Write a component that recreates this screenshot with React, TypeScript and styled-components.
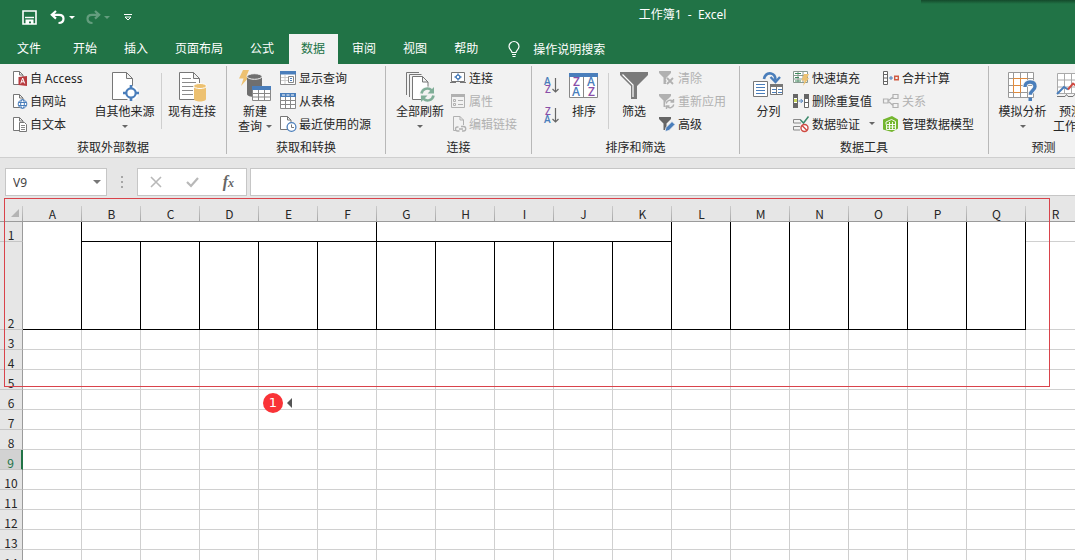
import React from 'react';
import styled, { createGlobalStyle, css } from 'styled-components';

const GREEN = '#217346';
const GREY = '#777777';
const BLUE = '#4a7ebb';
const PALE = '#b1b1b1';

const GlobalStyle = createGlobalStyle`
  * { box-sizing: border-box; }
  body {
    margin: 0;
    background: #e6e6e6;
    font-family: 'Noto Sans', 'Noto Sans CJK SC', sans-serif;
    font-size: 12px;
    color: #262626;
  }
  button, input { font: inherit; color: inherit; }
`;

const Window = styled.div`
  display: flex;
  flex-direction: column;
  height: 100vh;
  overflow: hidden;
`;

const PlainButton = styled.button`
  display: flex;
  align-items: center;
  flex: none;
  padding: 0;
  border: 0;
  background: none;
  white-space: nowrap;
  cursor: pointer;
`;

const Svg = styled.svg`
  display: block;
  flex: none;
  overflow: visible;
`;

/* ---------- title bar and tabs ---------- */

const Banner = styled.header`
  position: relative;
  flex: none;
  background: ${GREEN};
  color: #ffffff;
`;

const TopShade = styled.div`
  position: absolute;
  top: 0;
  right: 0;
  width: 154px;
  height: 4px;
  background: linear-gradient(#14492b, ${GREEN});
`;

const TitleBar = styled.div`
  display: flex;
  align-items: center;
  height: 34px;
`;

const QuickAccess = styled.div`
  display: flex;
  align-items: center;
  width: 290px;
  padding-left: 22px;
`;

const QuickButton = styled(PlainButton)<{ $gap: number; $dim?: boolean }>`
  margin-right: ${(p) => p.$gap}px;
  opacity: ${(p) => (p.$dim ? 0.3 : 1)};
`;

const Title = styled.h1`
  flex: 1;
  margin: 0;
  font-size: 12px;
  font-weight: 400;
  line-height: 30px;
  height: 34px;
  text-align: center;
  white-space: pre;
`;

const TabStrip = styled.nav`
  display: flex;
  gap: 2px;
  height: 30px;
  padding-left: 5px;
`;

const Tab = styled(PlainButton)<{ $active?: boolean; $wide?: boolean }>`
  height: 30px;
  padding: 0 13px 2px 12px;
  margin-right: ${(p) => (p.$wide ? 5 : 0)}px;
  ${(p) =>
    p.$active &&
    css`
      background: #f2f2f2;
      color: ${GREEN};
    `}
`;

const TellMe = styled(PlainButton)`
  gap: 13px;
  padding-left: 15px;
`;

/* ---------- ribbon ---------- */

const Ribbon = styled.section`
  display: flex;
  flex: none;
  height: 94px;
  padding-top: 2px;
  overflow-x: auto;
  overflow-y: hidden;
  scrollbar-width: none;
  background: #f2f2f2;
  border-bottom: 1px solid #cfcfcf;
`;

const Group = styled.div<{ $left: number; $right?: number }>`
  flex: none;
  padding: 0 ${(p) => p.$right ?? 0}px 0 ${(p) => p.$left}px;
  border-right: 1px solid transparent;
  border-image: linear-gradient(#b8b8b8 87px, transparent 87px) 1;
`;

const GroupBody = styled.div`
  display: flex;
  height: 72px;
`;

const GroupLabel = styled.div<{ $left: number; $right: number }>`
  margin: 0 -${(p) => p.$right}px 0 -${(p) => p.$left}px;
  line-height: 20px;
  text-align: center;
  white-space: nowrap;
`;

const Divider = styled.div`
  width: 1px;
  height: 56px;
  margin-top: 7px;
  background: #cfcfcf;
`;

const Column = styled.div<{ $width: number }>`
  width: ${(p) => p.$width}px;
`;

const SmallButton = styled(PlainButton)`
  gap: 3px;
  height: 23px;
  &:disabled { color: ${PALE}; cursor: default; }
`;

const SortColumn = styled.div`
  display: flex;
  flex-direction: column;
  gap: 13px;
  width: 18px;
  padding: 11px 0 0 2px;
`;

const BigButton = styled(PlainButton)<{ $width: number }>`
  flex-direction: column;
  width: ${(p) => p.$width}px;
  height: 72px;
  padding-top: 6px;
`;

const BigLabel = styled.span`
  margin-top: 2px;
  line-height: 15px;
  text-align: center;
`;

const CaretRow = styled.span`
  display: flex;
  align-items: center;
  justify-content: center;
  gap: 4px;
`;

const LoneCaret = styled.span`
  margin-top: 6px;
`;

/* ---------- formula bar ---------- */

const FormulaBar = styled.section`
  display: flex;
  flex: none;
  height: 38px;
  padding: 10px 0 0 5px;
`;

const NameBox = styled.div`
  display: flex;
  align-items: center;
  width: 102px;
  height: 28px;
  padding-right: 5px;
  background: #ffffff;
  border: 1px solid #c6c6c6;
`;

const NameInput = styled.input`
  flex: 1;
  min-width: 0;
  padding: 0 0 0 7px;
  border: 0;
  outline: 0;
  background: none;
  color: #444444;
`;

const Grip = styled.div`
  display: flex;
  justify-content: center;
  align-items: center;
  width: 30px;
`;

const FormulaActions = styled.div`
  display: flex;
  align-items: center;
  justify-content: space-between;
  width: 110px;
  height: 28px;
  padding: 0 12px;
  background: #ffffff;
  border: 1px solid #c6c6c6;
`;

const FxMark = styled.span`
  font-family: 'Liberation Serif', serif;
  font-size: 16px;
  font-style: italic;
  font-weight: 700;
  line-height: 20px;
  color: #666666;
  small { font-size: 12px; }
`;

const FormulaInput = styled.input`
  flex: 1;
  min-width: 0;
  height: 28px;
  margin-left: 3px;
  padding: 0 8px;
  border: 1px solid #c6c6c6;
  border-right: 0;
  outline: 0;
  background: #ffffff;
`;

/* ---------- sheet ---------- */

const Sheet = styled.main`
  position: relative;
  flex: 1;
  min-height: 0;
  overflow: auto;
  scrollbar-width: none;
  background: #e6e6e6;
`;

const Grid = styled.table`
  width: 1557px;
  table-layout: fixed;
  border-collapse: separate;
  border-spacing: 0;
  background: #ffffff;
  font-family: 'Noto Sans CJK SC', sans-serif;
`;

const HeadCol = styled.col`
  width: 23px;
`;

const DataCol = styled.col`
  width: 59px;
`;

const ColumnHead = styled.th`
  height: 26px;
  padding: 0;
  border-bottom: 1px solid #9b9b9b;
  background: linear-gradient(#cccccc, #a6a6a6) right bottom / 1px 15px no-repeat #e6e6e6;
  font-weight: 400;
  line-height: 15px;
  vertical-align: bottom;
  text-align: center;
`;

const Corner = styled.span`
  display: block;
  width: 0;
  margin: 0 0 4px 11px;
  border-left: 8px solid transparent;
  border-bottom: 8px solid #b4b4b4;
`;

const RowHead = styled.th<{ $selected?: boolean }>`
  padding: 0;
  border-right: 1px solid #9b9b9b;
  border-bottom: 1px solid #c6c6c6;
  background: #e6e6e6;
  font-weight: 400;
  line-height: 13px;
  vertical-align: bottom;
  text-align: center;
  ${(p) =>
    p.$selected &&
    css`
      background: #d2d2d2;
      color: ${GREEN};
      border-right: 2px solid ${GREEN};
    `}
`;

const Row = styled.tr<{ $height: number }>`
  height: ${(p) => p.$height}px;
`;

const Cell = styled.td<{ $boxed?: boolean }>`
  padding: 0;
  border-right: 1px solid ${(p) => (p.$boxed ? '#000000' : '#d0d0d0')};
  border-bottom: 1px solid ${(p) => (p.$boxed ? '#000000' : '#d0d0d0')};
`;

const Outline = styled.div`
  position: absolute;
  top: 2px;
  left: 4px;
  width: 1046px;
  height: 189px;
  border: 1px solid #d9434b;
  pointer-events: none;
`;

const Marker = styled.div`
  position: absolute;
  top: 197px;
  left: 263px;
  display: flex;
  align-items: center;
  gap: 4px;
`;

const MarkerDot = styled.span`
  width: 20px;
  height: 20px;
  border-radius: 50%;
  background: #f93337;
  color: #ffffff;
  font-family: 'DejaVu Sans', sans-serif;
  font-size: 13px;
  line-height: 20px;
  text-align: center;
`;

/* ---------- icons ---------- */

type IconProps = { w?: number; h?: number; children: React.ReactNode };
const Icon = ({ w = 16, h = 16, children }: IconProps) => (
  <Svg width={w} height={h} viewBox={`0 0 ${w} ${h}`} fill="none" aria-hidden="true">
    {children}
  </Svg>
);

const Caret = ({ color = '#666666' }: { color?: string }) => (
  <Icon w={6} h={3}><path d="M0 0h6L3 3z" fill={color} /></Icon>
);

const SmallPage = ({ color = GREY }: { color?: string }) => (
  <path d="M2.5 1.5h6l3.500 3.500v9.500h-9.500zM8.500 1.500v3.500h3.500" fill="#fff" stroke={color} />
);

const SaveIcon = () => (
  <Icon w={15} h={15}>
    <path d="M1 1h13v13H1z" stroke="#fff" strokeWidth="1.600" />
    <path d="M3 7.500h9" stroke="#fff" strokeWidth="1.400" />
    <path d="M3.500 9.500h8V14H9v-2.500H7V14H3.500z" fill="#fff" />
  </Icon>
);
const UndoIcon = () => (
  <Icon w={15} h={14}>
    <path d="M6 1L1.800 4.800 6 8.600M2 4.800h7c3 0 4.500 1.800 4.500 4 0 2.400-1.800 4.200-5 4.200" stroke="#fff" strokeWidth="2.200" />
  </Icon>
);
const RedoIcon = () => (
  <Icon w={15} h={14}>
    <path d="M9 1l4.200 3.800L9 8.600M13 4.800H6c-3 0-4.500 1.800-4.500 4C1.500 11.200 3.300 13 6.500 13" stroke="#fff" strokeWidth="2.200" />
  </Icon>
);
const CustomizeIcon = () => (
  <Icon w={8} h={7}><path d="M0 .5h8M1 3l3 3 3-3z" stroke="#fff" /></Icon>
);
const BulbIcon = () => (
  <Icon w={12} h={16}>
    <path d="M4 11.500C4 9.500 1 8.500 1 5.500a5 5 0 0 1 10 0c0 3-3 4-3 6zM4 13.500h4M4.500 15.500h3" stroke="#fff" strokeWidth="1.200" />
  </Icon>
);

const AccessIcon = () => (
  <Icon>
    <SmallPage />
    <path d="M7.500 7l8.500-1v10l-8.500-1z" fill="#b83b3f" />
    <path d="M9.700 13.500l2-5.500 2 5.500M10.400 11.800h2.600" stroke="#fff" />
  </Icon>
);
const WebIcon = () => (
  <Icon>
    <SmallPage />
    <circle cx="11.500" cy="11" r="4.300" fill="#fff" stroke={BLUE} />
    <ellipse cx="11.500" cy="11" rx="1.900" ry="4.300" stroke={BLUE} />
    <path d="M7.300 9.500h8.400M7.300 12.500h8.400" stroke={BLUE} />
  </Icon>
);
const TextFileIcon = () => (
  <Icon>
    <SmallPage />
    <path d="M8.500 6.500h5l2 2v7h-7z" fill="#fff" stroke={GREY} />
    <path d="M10 9.500h4M10 11.500h4M10 13.500h4" stroke="#888" />
  </Icon>
);
const OtherSourceIcon = () => (
  <Icon w={28} h={30}>
    <path d="M1.500.5h14l6 6v21h-20zM15.500.5v6h6" fill="#fff" stroke={GREY} />
    <circle cx="20" cy="21" r="7.500" fill="#fff" />
    <circle cx="20" cy="21" r="4.700" stroke={BLUE} strokeWidth="2.200" fill="#fff" />
    <path d="M20 13v4M20 25v4M12 21h4M24 21h4" stroke={BLUE} strokeWidth="2.600" />
  </Icon>
);
const ExistingIcon = () => (
  <Icon w={28} h={30}>
    <path d="M1.500.5h14l6 6v21h-20zM15.500.5v6h6" fill="#fff" stroke={GREY} />
    <path d="M4 6.500h9M4 10.500h14M4 14.500h12M4 18.500h11M4 22.500h11" stroke="#8a8a8a" />
    <path d="M16 14v13c0 1.500 2.600 2.500 6 2.500s6-1 6-2.500V14z" fill="#edc171" />
    <ellipse cx="22" cy="14" rx="6.500" ry="2.500" fill="#edc171" stroke="#fff" />
  </Icon>
);
const NewQueryIcon = () => (
  <Icon w={32} h={30}>
    <path d="M4-2h6L7.500 4H11L2 14l2.500-7.500H0z" fill="#edc171" />
    <path d="M8 5v17c0 2 3.500 3 7.500 3s7.500-1 7.500-3V5z" fill="#6f6f6f" />
    <ellipse cx="15.500" cy="4.500" rx="7.500" ry="2.800" fill="#6f6f6f" stroke="#f2f2f2" />
    <path d="M13.500 14.500h18v14h-18z" fill="#fff" stroke="#888" />
    <path d="M13 14h19v4H13z" fill={BLUE} />
    <path d="M19.500 18v10.500M25.500 18v10.500M14 21.500h18M14 25h18" stroke="#888" />
  </Icon>
);
const ShowQueryIcon = () => (
  <Icon>
    <path d="M.5 1.500h15v13H.5z" fill="#fff" stroke="#888" />
    <path d="M0 1h16v3.500H0z" fill={BLUE} />
    <path d="M1 7.500h7.500M1 10.500h7.500M5 5v9" stroke="#ccc" />
    <path d="M8.500 6.500h5v6h-5z" fill="#fff" stroke="#888" /><path d="M10 8.500h2M10 10.500h2" stroke={BLUE} />
  </Icon>
);
const TableIcon = () => (
  <Icon>
    <path d="M.5.5h15v15H.5z" fill="#fff" stroke="#888" />
    <path d="M0 0h16v4H0z" fill={BLUE} />
    <path d="M2 2h3M6.500 2h3M11 2h3" stroke="#fff" />
    <path d="M5.500 4v12M10.500 4v12M0 7.500h16M0 11.500h16" stroke="#888" />
  </Icon>
);
const RecentIcon = () => (
  <Icon>
    <path d="M.5.5h7l3.500 3.500v9.500H.5zM7.500.5v3.500H11" fill="#fff" stroke={GREY} />
    <circle cx="11.500" cy="11" r="4.400" fill="#fff" stroke={BLUE} strokeWidth="1.300" />
    <path d="M11.500 8.500V11.500h2.500" stroke={GREY} />
  </Icon>
);
const RefreshAllIcon = () => (
  <Icon w={30} h={30}>
    <path d="M1.500 23V.5h12.500M4.500 25V2.500h12" stroke={GREY} />
    <path d="M7.500 4.500h10l5.500 5.500v17.500H7.500zM17.500 4.500V10H23" fill="#fff" stroke={GREY} />
    <circle cx="22.500" cy="22.500" r="8" fill="#f2f2f2" />
    <path d="M16.500 21.500a6 6 0 0 1 10-3.300M28.500 23.500a6 6 0 0 1-10 3.300" stroke="#80ae98" strokeWidth="2.600" />
    <path d="M29 15v6.500H22.500zM16 30v-6.500H22.500z" fill="#80ae98" />
  </Icon>
);
const ConnectionsIcon = () => (
  <Icon>
    <path d="M1.500 11.500v-9h13v9z" fill="#fff" stroke={GREY} />
    <path d="M0 12.500h6M10 12.500h6" stroke={GREY} />
    <circle cx="8" cy="7" r="1.900" stroke={BLUE} strokeWidth="1.400" />
    <path d="M8 3.500v2M8 8.500v2M4.500 7h2M9.500 7h2" stroke={BLUE} strokeWidth="1.400" />
  </Icon>
);
const PropertiesIcon = () => (
  <Icon>
    <path d="M1.500 1.500h13v13h-13z" stroke={PALE} /><path d="M1 1h14v3H1z" fill={PALE} />
    <path d="M3.500 6.500h2v2h-2zM3.500 10.500h2v2h-2zM8 7.500h5M8 11.500h5" stroke={PALE} />
  </Icon>
);
const EditLinksIcon = () => (
  <Icon>
    <path d="M6 14.500H3.500V.5h6.500l3.500 3.500v5M10 .5V4h3.500" stroke={PALE} />
    <path d="M8.500 11h-1a2 2 0 0 0 0 4h2M11 10.500h2.500a2 2 0 0 1 0 4.500H12M9 13h4" stroke={PALE} strokeWidth="1.300" />
  </Icon>
);

const Letter = ({ x, y, size, color, children }: { x: number; y: number; size: number; color: string; children: string }) => (
  <text x={x} y={y} fontFamily="Open Sans, sans-serif" fontSize={size} fontWeight="600" fill={color}>{children}</text>
);
const PURPLE = '#8a4fa8';
const SortIcon = ({ top, bottom }: { top: string; bottom: string }) => (
  <Icon w={15} h={17}>
    <Letter x={top === 'A' ? 0 : 1} y={8} size={10} color={top === 'A' ? BLUE : PURPLE}>{top}</Letter>
    <Letter x={bottom === 'A' ? 0 : 1} y={16} size={10} color={bottom === 'A' ? BLUE : PURPLE}>{bottom}</Letter>
    <path d="M11.500 1v14M8.500 12l3 3 3-3" stroke="#666" strokeWidth="1.200" />
  </Icon>
);
const SortBigIcon = () => (
  <Icon w={30} h={30}>
    <path d="M.5 1.500h28v24H.5zM14.500 5v20" fill="#fff" stroke="#888" />
    <path d="M0 1h29v4H0z" fill={BLUE} />
    <Letter x={4} y={14} size={12} color={PURPLE}>Z</Letter>
    <Letter x={3} y={24} size={12} color={BLUE}>A</Letter>
    <Letter x={18} y={14} size={12} color={BLUE}>A</Letter>
    <Letter x={19} y={24} size={12} color={PURPLE}>Z</Letter>
  </Icon>
);
const FilterBigIcon = () => (
  <Icon w={28} h={30}>
    <path d="M0 0h28v3L17 14v13h-6V14L0 3z" fill="#7a7a7a" />
    <path d="M2.500 2.500l10.500 10.500v12" stroke="#fff" strokeWidth="1.200" />
  </Icon>
);
const Funnel = ({ color }: { color: string }) => <path d="M0 1h12v2L7.500 7.500V14h-3V7.500L0 3z" fill={color} />;
const ClearIcon = () => (
  <Icon><Funnel color={PALE} /><path d="M8 8l6 6M14 8l-6 6" stroke="#f2f2f2" strokeWidth="4" /><path d="M8 8l6 6M14 8l-6 6" stroke={PALE} strokeWidth="1.800" /></Icon>
);
const ReapplyIcon = () => (
  <Icon>
    <Funnel color={PALE} /><circle cx="11" cy="11" r="5" fill="#f2f2f2" />
    <path d="M7.200 10.500a4 4 0 0 1 6.800-2M14.800 11.500a4 4 0 0 1-6.800 2M14.500 6v3h-3M7.500 16v-3h3" stroke={PALE} strokeWidth="1.400" />
  </Icon>
);
const AdvancedIcon = () => (
  <Icon>
    <Funnel color="#666" />
    <path d="M6 15.500l1-4 6-6 3 3-6 6z" fill={BLUE} stroke="#f2f2f2" strokeWidth=".8" />
  </Icon>
);
const SplitIcon = () => (
  <Icon w={31} h={30}>
    <path d="M11 7c1-4.500 4-6 7-5.500 3 .6 4.500 3 4.500 6.500" stroke={BLUE} strokeWidth="2.600" />
    <path d="M17.500 5l5 5 4.500-5" stroke={BLUE} strokeWidth="2.400" />
    <path d="M.5 9.500h14v15H.5z" fill="#fff" stroke={GREY} />
    <path d="M3 12.500h9M3 15.500h9M3 18.500h9M3 21.500h9" stroke={BLUE} />
    <path d="M17.500 12.500h12v10h-12z" fill="#fff" stroke={GREY} /><path d="M17 12h13v3H17z" fill={GREY} />
    <path d="M19 17.500h4M25 17.500h4M19 20.500h4M25 20.500h4" stroke={BLUE} />
    <path d="M23.500 14v9" stroke={GREY} />
  </Icon>
);
const FlashFillIcon = () => (
  <Icon>
    <path d="M.5 1.500h14v11H.5zM.5 5.500h14M.5 9h14M5 1.500v11M10 1.500v11" fill="#fff" stroke="#8a9a90" />
    <path d="M2 3.500h6M2 7.500h4M2 11h6" stroke="#3d8a5c" />
    <path d="M11 4h5l-2 4h2l-6 8 1.500-5.500H8.500z" fill="#edc171" />
  </Icon>
);
const DuplicatesIcon = () => (
  <Icon>
    <path d="M.5 1.500h4v13h-4zM11.500 1.500h4v13h-4z" fill="#fff" stroke="#666" />
    <path d="M0 1h5v4H0zM0 10h5v5H0zM11 1h5v4h-5z" fill="#666" />
    <path d="M1 6h3v3H1z" fill="#c8d65b" /><path d="M12 6h3v3h-3z" fill="#fff" />
    <path d="M11.500 5.500h4M11.500 9.500h4" stroke="#666" />
    <path d="M5.500 8h4M7.700 6l2 2-2 2" stroke={BLUE} />
  </Icon>
);
const ValidationIcon = () => (
  <Icon>
    <path d="M8 3.500H.5v3.500H8M7 10.500H.5V14H7" stroke="#888" />
    <path d="M7.500 4l3 3 5-6.500" stroke="#3d8a6c" strokeWidth="1.500" />
    <circle cx="11.500" cy="12" r="3.500" fill="#fff" stroke="#cf4a42" strokeWidth="1.400" />
    <path d="M9 9.500l5 5" stroke="#cf4a42" strokeWidth="1.400" />
  </Icon>
);
const ConsolidateIcon = () => (
  <Icon>
    <path d="M.5 1.500h4v13h-4zM.5 4.500h4M.5 8h4M.5 11.500h4" fill="#fff" stroke="#666" />
    <path d="M6 8h4M8 6v4" stroke={BLUE} />
    <path d="M11.700 6.200h3.600v3.600h-3.600z" stroke="#cf5a42" strokeWidth="1.400" />
  </Icon>
);
const RelationsIcon = () => (
  <Icon>
    <path d="M.5 6h4.500v4H.5zM10 1.500h5v4h-5zM10 10.500h5v4h-5zM5 8l5-4M5 8l5 4.500" stroke={PALE} strokeWidth="1.200" />
  </Icon>
);
const ModelIcon = () => (
  <Icon>
    <path d="M0 3.500L9 0l6 3.500v9L9 16l-9-2.500z" fill="#74b62f" />
    <path d="M3 8.500V6L8.500 3.500 12.500 5.500v8h-9v-5h9M3.500 11h9M6.500 6v7.500M9.500 6v7.500" stroke="#fff" strokeWidth=".9" />
  </Icon>
);
const WhatIfIcon = () => (
  <Icon w={30} h={30}>
    <path d="M.5.500h25v25H.5zM5.500.5v25M12.500.5v25M19.500.5v25M.5 6.500h25M.5 13.500h25M.5 20.500h25" fill="#fff" stroke="#999" />
    <path d="M5.500 6.500h7v7h-7zM12.500 13.500v7h-7v-7M12.500 6.500h7" stroke="#e08a3c" />
    <path d="M17 15c0-3.500 2.200-5 5-5 3 0 5 1.700 5 4.500 0 4-4.700 4.200-4.700 8.200" stroke="#f2f2f2" strokeWidth="5" />
    <path d="M17 15c0-3.500 2.200-5 5-5 3 0 5 1.700 5 4.500 0 4-4.700 4.200-4.700 8.200" stroke={BLUE} strokeWidth="3.400" />
    <path d="M20.500 25.500H24V29h-3.500z" fill={BLUE} />
  </Icon>
);
const ForecastIcon = () => (
  <Icon w={30} h={30}>
    <path d="M1.500 1.500h27v20h-27zM1.500 8h27M1.500 15h27M8.500 1.500v20M15.500 1.500v20M22 1.500v20" fill="#fff" stroke="#aaa" />
    <path d="M1 22l7-7 4 2.500" stroke={BLUE} strokeWidth="2" />
    <path d="M12 17.500l5-6 4 3 7-7" stroke="#cf4a42" strokeWidth="2" />
    <path d="M1 24.500h8l1.500-2 1.500 2h5l1.500-2 1.500 2h8" stroke={GREY} />
  </Icon>
);

/* ---------- ribbon pieces ---------- */

const CaretGap = styled.span`
  margin-left: 5px;
`;

type SmallProps = { icon: React.ReactNode; text: string; disabled?: boolean; caret?: boolean };
const Small = ({ icon, text, disabled, caret }: SmallProps) => (
  <SmallButton disabled={disabled}>
    {icon}
    <CaretRow>
      {text}
      {caret && <CaretGap><Caret /></CaretGap>}
    </CaretRow>
  </SmallButton>
);

type BigProps = { icon: React.ReactNode; text: string; second?: string; width: number; caret?: boolean };
const Big = ({ icon, text, second, width, caret }: BigProps) => (
  <BigButton $width={width}>
    {icon}
    <BigLabel>
      {text}
      {second && <CaretRow>{second}{caret && <Caret />}</CaretRow>}
    </BigLabel>
    {caret && !second && <LoneCaret><Caret /></LoneCaret>}
  </BigButton>
);

type RibbonGroupProps = { label: string; left: number; right?: number; children: React.ReactNode };
const RibbonGroup = ({ label, left, right = 0, children }: RibbonGroupProps) => (
  <Group $left={left} $right={right}>
    <GroupBody>{children}</GroupBody>
    <GroupLabel $left={left} $right={right}>{label}</GroupLabel>
  </Group>
);

const LETTERS = 'ABCDEFGHIJKLMNOPQRSTUVWXYZ'.split('');
const PLAIN_ROWS = Array.from({ length: 38 }, (_, i) => i + 3);
const TABS = ['文件', '开始', '插入', '页面布局', '公式', '数据', '审阅', '视图', '帮助'];

export default function App() {
  return (
    <Window>
      <GlobalStyle />
      <Banner>
        <TopShade />
        <TitleBar>
          <QuickAccess>
            <QuickButton $gap={13} aria-label="保存"><SaveIcon /></QuickButton>
            <QuickButton $gap={4} aria-label="撤消"><UndoIcon /></QuickButton>
            <QuickButton $gap={11} aria-label="撤消选项"><Caret color="#ffffff" /></QuickButton>
            <QuickButton $gap={3} $dim aria-label="恢复"><RedoIcon /></QuickButton>
            <QuickButton $gap={14} $dim aria-label="恢复选项"><Caret color="#ffffff" /></QuickButton>
            <QuickButton $gap={0} aria-label="自定义快速访问工具栏"><CustomizeIcon /></QuickButton>
          </QuickAccess>
          <Title>{'工作簿1  -  Excel'}</Title>
        </TitleBar>
        <TabStrip>
          {TABS.map((name) => (
            <Tab key={name} $active={name === '数据'} $wide={name === '文件'}>{name}</Tab>
          ))}
          <TellMe><BulbIcon />操作说明搜索</TellMe>
        </TabStrip>
      </Banner>

      <Ribbon>
        <RibbonGroup label="获取外部数据" left={11} right={4}>
          <Column $width={77}>
            <Small icon={<AccessIcon />} text="自 Access" />
            <Small icon={<WebIcon />} text="自网站" />
            <Small icon={<TextFileIcon />} text="自文本" />
          </Column>
          <Big icon={<OtherSourceIcon />} text="自其他来源" width={73} caret />
          <Divider />
          <Big icon={<ExistingIcon />} text="现有连接" width={60} />
        </RibbonGroup>
        <RibbonGroup label="获取和转换" left={3}>
          <Big icon={<NewQueryIcon />} text="新建" second="查询" width={50} caret />
          <Column $width={105}>
            <Small icon={<ShowQueryIcon />} text="显示查询" />
            <Small icon={<TableIcon />} text="从表格" />
            <Small icon={<RecentIcon />} text="最近使用的源" />
          </Column>
        </RibbonGroup>
        <RibbonGroup label="连接" left={4}>
          <Big icon={<RefreshAllIcon />} text="全部刷新" width={60} caret />
          <Column $width={81}>
            <Small icon={<ConnectionsIcon />} text="连接" />
            <Small icon={<PropertiesIcon />} text="属性" disabled />
            <Small icon={<EditLinksIcon />} text="编辑链接" disabled />
          </Column>
        </RibbonGroup>
        <RibbonGroup label="排序和筛选" left={10}>
          <SortColumn>
            <PlainButton aria-label="升序"><SortIcon top="A" bottom="Z" /></PlainButton>
            <PlainButton aria-label="降序"><SortIcon top="Z" bottom="A" /></PlainButton>
          </SortColumn>
          <Big icon={<SortBigIcon />} text="排序" width={48} />
          <Divider />
          <Big icon={<FilterBigIcon />} text="筛选" width={50} />
          <Column $width={80}>
            <Small icon={<ClearIcon />} text="清除" disabled />
            <Small icon={<ReapplyIcon />} text="重新应用" disabled />
            <Small icon={<AdvancedIcon />} text="高级" />
          </Column>
        </RibbonGroup>
        <RibbonGroup label="数据工具" left={4}>
          <Big icon={<SplitIcon />} text="分列" width={49} />
          <Column $width={90}>
            <Small icon={<FlashFillIcon />} text="快速填充" />
            <Small icon={<DuplicatesIcon />} text="删除重复值" />
            <Small icon={<ValidationIcon />} text="数据验证" caret />
          </Column>
          <Column $width={105}>
            <Small icon={<ConsolidateIcon />} text="合并计算" />
            <Small icon={<RelationsIcon />} text="关系" disabled />
            <Small icon={<ModelIcon />} text="管理数据模型" />
          </Column>
        </RibbonGroup>
        <RibbonGroup label="预测" left={3} right={9}>
          <Big icon={<WhatIfIcon />} text="模拟分析" width={61} caret />
          <Big icon={<ForecastIcon />} text="预测" second="工作表" width={36} />
        </RibbonGroup>
      </Ribbon>

      <FormulaBar>
        <NameBox>
          <NameInput aria-label="名称框" defaultValue="V9" />
          <PlainButton aria-label="名称列表">
            <Icon w={8} h={4}><path d="M0 0h8L4 4z" fill="#777" /></Icon>
          </PlainButton>
        </NameBox>
        <Grip>
          <Icon w={2} h={12}><path d="M0 0h2v2H0zM0 5h2v2H0zM0 10h2v2H0z" fill="#a6a6a6" /></Icon>
        </Grip>
        <FormulaActions>
          <PlainButton aria-label="取消">
            <Icon w={12} h={10}><path d="M1 0l10 10M11 0L1 10" stroke="#b8b8b8" strokeWidth="1.600" /></Icon>
          </PlainButton>
          <PlainButton aria-label="输入">
            <Icon w={13} h={10}><path d="M1 5l4 4 7-8" stroke="#b8b8b8" strokeWidth="2.200" /></Icon>
          </PlainButton>
          <PlainButton aria-label="插入函数"><FxMark>f<small>x</small></FxMark></PlainButton>
        </FormulaActions>
        <FormulaInput aria-label="编辑栏" />
      </FormulaBar>

      <Sheet>
        <Grid>
          <colgroup>
            <HeadCol />
            {LETTERS.map((l) => <DataCol key={l} />)}
          </colgroup>
          <thead>
            <tr>
              <ColumnHead><Corner /></ColumnHead>
              {LETTERS.map((l) => <ColumnHead key={l} scope="col">{l}</ColumnHead>)}
            </tr>
          </thead>
          <tbody>
            <Row $height={20}>
              <RowHead scope="row">1</RowHead>
              <Cell $boxed rowSpan={2} />
              <Cell $boxed colSpan={5} />
              <Cell $boxed colSpan={5} />
              {LETTERS.slice(11, 17).map((l) => <Cell key={l} $boxed rowSpan={2} />)}
              {LETTERS.slice(17).map((l) => <Cell key={l} />)}
            </Row>
            <Row $height={88}>
              <RowHead scope="row">2</RowHead>
              {LETTERS.slice(1, 11).map((l) => <Cell key={l} $boxed />)}
              {LETTERS.slice(17).map((l) => <Cell key={l} />)}
            </Row>
            {PLAIN_ROWS.map((n) => (
              <Row key={n} $height={20}>
                <RowHead scope="row" $selected={n === 9}>{n}</RowHead>
                {LETTERS.map((l) => <Cell key={l} />)}
              </Row>
            ))}
          </tbody>
        </Grid>
        <Outline />
        <Marker>
          <MarkerDot>1</MarkerDot>
          <Icon w={5} h={10}><path d="M5 0v10L0 5z" fill="#555" /></Icon>
        </Marker>
      </Sheet>
    </Window>
  );
}
